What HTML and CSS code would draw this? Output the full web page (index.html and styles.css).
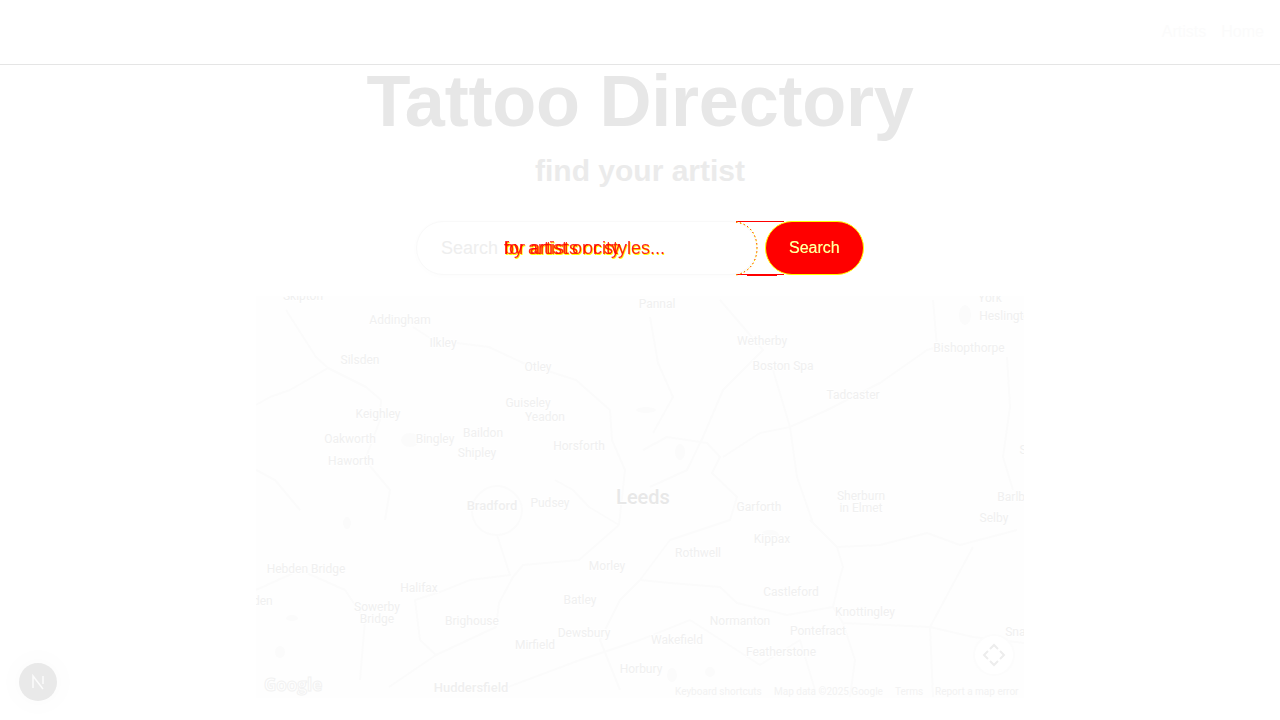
FILE: index.html
```html
<!DOCTYPE html>
<html lang="en">
<head>
<meta charset="utf-8">
<title>Tattoo Directory</title>
<link rel="stylesheet" href="styles.css">
</head>
<body>
<header class="topbar">
  <nav class="nav"><a class="nav-link">Artists</a><a class="nav-link">Home</a></nav>
</header>
<main class="main">
  <h1 class="title">Tattoo Directory</h1>
  <p class="subtitle">find your artist</p>
  <form class="search">
    <div class="field">
      <span class="placeholder">Search </span>
      <span class="ghost ghost-yellow">for artists or styles...</span>
      <span class="ghost ghost-yellow">by artist or city</span>
      <span class="ghost ghost-red">for artists or styles...</span>
      <span class="ghost ghost-red">by artist or city</span>
      <svg class="seam" width="60" height="56" viewBox="0 0 60 56">
        <path class="seam-red" d="M0 .5H48M0 53.5H48"/>
        <path class="seam-thick" d="M11 54H41"/>
        <path class="seam-yellow" d="M0 1C14 3 21 14 21 27S14 51 0 54"/>
        <path class="seam-arc" d="M0 1C14 3 21 14 21 27S14 51 0 54"/>
      </svg>
    </div>
    <button class="btn" type="button"><span class="btn-y">Search</span><span class="btn-w">Search</span></button>
  </form>
  <section class="map">
    <svg class="map-svg" width="768" height="402" viewBox="256 296 768 402">
      <g class="roads">
        <path d="M286 310L316 357L328 368L366 387L381 400L380 420L365 460L390 490L385 520"/>
        <path d="M256 405L270 397L290 390L328 368"/>
        <path d="M413 327L433 340L489 347L523 363L576 380L610 410L612 440L625 470L619 525"/>
        <path d="M619 525L589 507L573 490L555 480"/>
        <path d="M619 525L579 560L523 565L513 577L499 603L496 627L436 655L389 687"/>
        <path d="M497 535C480 535 472 522 472 510S484 486 497 486S522 498 522 510S512 535 497 535"/>
        <path d="M497 535L510 575L470 580L440 592L415 600L420 640L436 655"/>
        <path d="M256 590L300 570L345 590L365 620L360 680"/>
        <path d="M640 580L670 583L720 587L737 603L787 615L833 607L843 623L930 627L973 637L1024 643"/>
        <path d="M810 520L837 547L880 545L927 533L960 545L1017 530"/>
        <path d="M973 547L930 627L933 697"/>
        <path d="M837 547L843 567L840 577L833 607"/>
        <path d="M773 370L790 427L797 477L813 523"/>
        <path d="M790 427L827 410L880 383L927 350L937 347L933 300"/>
        <path d="M723 457L760 433L790 427"/>
        <path d="M1007 357L1010 407L1003 457L1013 490"/>
        <path d="M650 317L658 363L673 397L653 433"/>
        <path d="M720 300L763 350L723 390L703 437L687 470L650 487"/>
        <path d="M643 450L667 437L707 443L720 457L712 473L737 497L730 520L670 540L640 580"/>
        <path d="M640 580L620 600L600 640L620 690"/>
        <path d="M843 623L855 660L850 697"/>
        <path d="M690 620L760 665L800 640L815 690"/>
        <path d="M500 690L580 660L640 640L690 620"/>
        <path d="M256 470L275 480L300 510"/>
      </g>
      <g class="blobs">
        <ellipse cx="646" cy="410" rx="10" ry="3"/><ellipse cx="680" cy="452" rx="5" ry="8"/>
        <ellipse cx="965" cy="315" rx="6" ry="10"/><ellipse cx="770" cy="535" rx="9" ry="5"/>
        <ellipse cx="410" cy="440" rx="9" ry="7"/><ellipse cx="347" cy="523" rx="4" ry="6"/>
        <ellipse cx="280" cy="652" rx="5" ry="6"/><ellipse cx="292" cy="618" rx="6" ry="3"/>
        <ellipse cx="672" cy="675" rx="5" ry="7"/><ellipse cx="710" cy="672" rx="5" ry="5"/>
      </g>
      <g class="labels">
        <text x="303" y="300">Skipton</text><text x="400" y="324">Addingham</text><text x="443" y="347">Ilkley</text>
        <text x="360" y="364">Silsden</text><text x="538" y="371">Otley</text><text x="528" y="407">Guiseley</text>
        <text x="545" y="421">Yeadon</text><text x="378" y="418">Keighley</text><text x="483" y="437">Baildon</text>
        <text x="350" y="443">Oakworth</text><text x="435" y="443">Bingley</text><text x="477" y="457">Shipley</text>
        <text x="579" y="450">Horsforth</text><text x="351" y="465">Haworth</text><text x="657" y="308">Pannal</text>
        <text x="762" y="345">Wetherby</text><text x="783" y="370">Boston Spa</text><text x="969" y="352">Bishopthorpe</text>
        <text x="990" y="302">York</text><text x="1008" y="320">Heslington</text><text x="853" y="399">Tadcaster</text>
        <text x="1023" y="454">S</text><text x="550" y="507">Pudsey</text><text x="759" y="511">Garforth</text>
        <text x="861" y="500">Sherburn</text><text x="861" y="512">in Elmet</text><text x="1014" y="501">Barlby</text>
        <text x="994" y="522">Selby</text><text x="772" y="543">Kippax</text><text x="698" y="557">Rothwell</text>
        <text x="607" y="570">Morley</text><text x="306" y="573">Hebden Bridge</text><text x="419" y="592">Halifax</text>
        <text x="252" y="605">Hebden</text><text x="377" y="611">Sowerby</text><text x="377" y="623">Bridge</text>
        <text x="580" y="604">Batley</text><text x="791" y="596">Castleford</text><text x="865" y="616">Knottingley</text>
        <text x="472" y="625">Brighouse</text><text x="740" y="625">Normanton</text><text x="818" y="635">Pontefract</text>
        <text x="584" y="637">Dewsbury</text><text x="1022" y="636">Snaith</text><text x="535" y="649">Mirfield</text>
        <text x="677" y="644">Wakefield</text><text x="781" y="656">Featherstone</text><text x="641" y="673">Horbury</text>
      </g>
      <text class="label-mid" x="492" y="510">Bradford</text>
      <text class="label-mid" x="471" y="692">Huddersfield</text>
      <text class="label-big" x="643" y="504">Leeds</text>
      <text class="google" x="264" y="691">Google</text>
      <g class="legal">
        <text x="675" y="695">Keyboard shortcuts</text><text x="774" y="695">Map data ©2025 Google</text>
        <text x="895" y="695">Terms</text><text x="935" y="695">Report a map error</text>
      </g>
      <circle class="ctl" cx="994" cy="655" r="20"/>
      <path class="ctl-arrows" d="M990 649L994 645L998 649M990 661L994 665L998 661M988 651L984 655L988 659M1000 651L1004 655L1000 659"/>
    </svg>
  </section>
</main>
<div class="devbadge">
  <svg width="38" height="38" viewBox="0 0 38 38"><path class="devn" d="M14 25V13L24 26M24 13V21"/></svg>
</div>
</body>
</html>
```
FILE: styles.css
```css
* { box-sizing: border-box; }
html, body { margin: 0; height: 720px; overflow: hidden; background: #fff; }
body { font-family: "Liberation Sans", Arial, sans-serif; }
.topbar { height: 65px; border-bottom: 1px solid #e5e5e5; display: flex; justify-content: flex-end; align-items: center; padding: 0 16px; }
.nav { display: flex; gap: 15px; }
.nav-link { font-size: 16px; color: #fbfbfb; }
.main { display: flex; flex-direction: column; align-items: center; }
.title { margin: 0; font-size: 72px; line-height: 72px; font-weight: 700; letter-spacing: -.22px; color: #e7e7e7; }
.subtitle { margin: 16px 0 0; font-size: 30px; line-height: 36px; font-weight: 700; color: #ebebeb; }
.search { display: flex; gap: 8px; margin-top: 32px; width: 448px; }
.field { position: relative; width: 341px; height: 54px; border: 1px solid #f9f9f9; border-radius: 27px; box-shadow: 0 1px 6px #fcfcfc; font-size: 18px; line-height: 52px; padding-left: 24px; color: #eeeeee; white-space: nowrap; }
.ghost { position: absolute; left: 87px; top: 0; }
.ghost-yellow { color: #ff0; left: 88px; top: 1px; }
.ghost-red { color: #f00; opacity: .85; }
.seam { position: absolute; left: 319px; top: -1px; }
.seam-red { fill: none; stroke: #f00; stroke-width: 1; }
.seam-thick { fill: none; stroke: #f00; stroke-width: 2; }
.seam-yellow { fill: none; stroke: #ff0; stroke-width: 1; stroke-dasharray: 2 2; }
.seam-arc { fill: none; stroke: #f00; stroke-width: 1; stroke-dasharray: 1 3; }
.btn { position: relative; width: 99px; height: 54px; border: 1px solid #ff0; border-radius: 27px; background: #f00; font: 16px "Liberation Sans", Arial, sans-serif; padding: 0; }
.btn-y { position: absolute; left: 23px; top: 17px; color: #ff0; }
.btn-w { position: absolute; left: 23px; top: 17px; color: #fff; opacity: .7; }
.map { margin-top: 21px; width: 768px; height: 402px; background: #fefefe; overflow: hidden; }
.map-svg { display: block; }
.roads { filter: blur(.6px); }
.roads path { fill: none; stroke: #fbfbfb; stroke-width: 2; stroke-linejoin: round; }
.blobs ellipse { fill: #fbfbfb; }
.labels text { font: 12px Roboto, sans-serif; fill: #f0f0f0; text-anchor: middle; stroke: #fff; stroke-width: 2px; paint-order: stroke; }
.label-mid { font: 500 13px Roboto, sans-serif; fill: #efefef; text-anchor: middle; stroke: #fff; stroke-width: 2px; paint-order: stroke; }
.label-big { font: 500 20px Roboto, sans-serif; fill: #e8e8e8; text-anchor: middle; stroke: #fff; stroke-width: 2px; paint-order: stroke; }
.google { font: 700 17px "Open Sans", sans-serif; fill: #fff; stroke: #f2f2f2; stroke-width: 1px; }
.legal text { font: 10px Roboto, sans-serif; fill: #f2f2f2; }
.ctl { fill: #fff; stroke: #fcfcfc; stroke-width: 2; }
.ctl-arrows { fill: none; stroke: #ededed; stroke-width: 2; }
.devbadge { position: fixed; left: 19px; bottom: 19px; width: 38px; height: 38px; border-radius: 50%; background: #e9e9e9; box-shadow: 0 0 20px 10px #fdfdfd; }
.devbadge svg { display: block; }
.devn { fill: none; stroke: #fbfbfb; stroke-width: 1.5; }
```
